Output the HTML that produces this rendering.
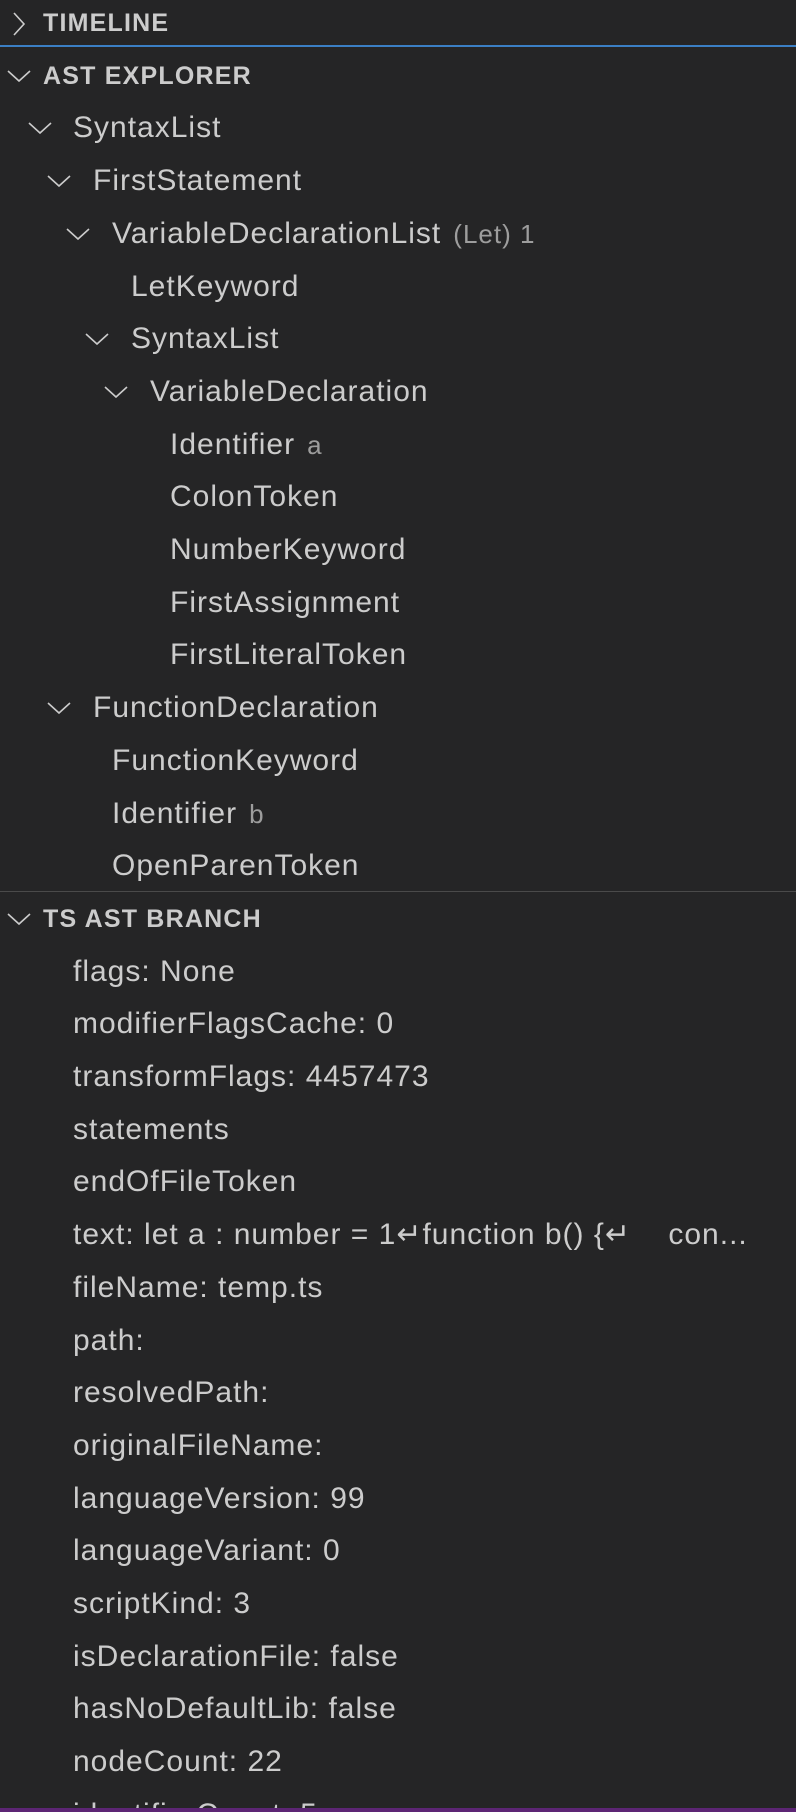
<!DOCTYPE html>
<html><head><meta charset="utf-8"><style>
html,body{margin:0;padding:0;background:#252526;width:796px;height:1812px;overflow:hidden;}
body{position:relative;font-family:"Liberation Sans",sans-serif;color:#cccccc;}
.r{position:absolute;left:0;right:0;height:52.7px;line-height:52.7px;font-size:30px;letter-spacing:1px;white-space:nowrap;}
.h{font-weight:bold;font-size:25px;letter-spacing:1.2px;}
.d{color:#9d9d9d;font-size:26px;margin-left:12px;letter-spacing:1px;}
svg.c{position:absolute;top:19px;}
.t{position:absolute;}
</style></head><body>
<div style="position:absolute;left:0;right:0;top:45px;height:2px;background:#3b7fc4"></div>
<div style="position:absolute;left:0;right:0;top:891px;height:1px;background:#4a4a4a"></div>

<div class="r h" style="top:-3px"><svg class="c" style="left:12px;top:14px" width="14" height="26" viewBox="0 0 14 26"><path d="M2 2 L12 13 L2 24" fill="none" stroke="#ccc" stroke-width="1.6"/></svg><span class="t" style="left:43px">TIMELINE</span></div>
<div class="r h" style="top:49.7px"><svg class="c" style="left:6px" width="26" height="14" viewBox="0 0 26 14"><path d="M2 2 L13 12 L24 2" fill="none" stroke="#ccc" stroke-width="1.6"/></svg><span class="t" style="left:43px">AST EXPLORER</span></div>

<div class="r" style="top:102.4px"><svg class="c" style="left:27px" width="26" height="14" viewBox="0 0 26 14"><path d="M2 2 L13 12 L24 2" fill="none" stroke="#ccc" stroke-width="1.6"/></svg><span class="t" style="left:73px">SyntaxList</span></div>
<div class="r" style="top:155.1px"><svg class="c" style="left:46px" width="26" height="14" viewBox="0 0 26 14"><path d="M2 2 L13 12 L24 2" fill="none" stroke="#ccc" stroke-width="1.6"/></svg><span class="t" style="left:93px">FirstStatement</span></div>
<div class="r" style="top:207.8px"><svg class="c" style="left:65px" width="26" height="14" viewBox="0 0 26 14"><path d="M2 2 L13 12 L24 2" fill="none" stroke="#ccc" stroke-width="1.6"/></svg><span class="t" style="left:112px">VariableDeclarationList<span class="d">(Let) 1</span></span></div>
<div class="r" style="top:260.5px"><span class="t" style="left:131px">LetKeyword</span></div>
<div class="r" style="top:313.2px"><svg class="c" style="left:84px" width="26" height="14" viewBox="0 0 26 14"><path d="M2 2 L13 12 L24 2" fill="none" stroke="#ccc" stroke-width="1.6"/></svg><span class="t" style="left:131px">SyntaxList</span></div>
<div class="r" style="top:365.9px"><svg class="c" style="left:103px" width="26" height="14" viewBox="0 0 26 14"><path d="M2 2 L13 12 L24 2" fill="none" stroke="#ccc" stroke-width="1.6"/></svg><span class="t" style="left:150px">VariableDeclaration</span></div>
<div class="r" style="top:418.6px"><span class="t" style="left:170px">Identifier<span class="d">a</span></span></div>
<div class="r" style="top:471.3px"><span class="t" style="left:170px">ColonToken</span></div>
<div class="r" style="top:524px"><span class="t" style="left:170px">NumberKeyword</span></div>
<div class="r" style="top:576.7px"><span class="t" style="left:170px">FirstAssignment</span></div>
<div class="r" style="top:629.4px"><span class="t" style="left:170px">FirstLiteralToken</span></div>
<div class="r" style="top:682.1px"><svg class="c" style="left:46px" width="26" height="14" viewBox="0 0 26 14"><path d="M2 2 L13 12 L24 2" fill="none" stroke="#ccc" stroke-width="1.6"/></svg><span class="t" style="left:93px">FunctionDeclaration</span></div>
<div class="r" style="top:734.8px"><span class="t" style="left:112px">FunctionKeyword</span></div>
<div class="r" style="top:787.5px"><span class="t" style="left:112px">Identifier<span class="d">b</span></span></div>
<div class="r" style="top:840.2px"><span class="t" style="left:112px">OpenParenToken</span></div>

<div class="r h" style="top:892.9px"><svg class="c" style="left:6px" width="26" height="14" viewBox="0 0 26 14"><path d="M2 2 L13 12 L24 2" fill="none" stroke="#ccc" stroke-width="1.6"/></svg><span class="t" style="left:43px">TS AST BRANCH</span></div>
<div class="r" style="top:945.6px"><span class="t" style="left:73px">flags: None</span></div>
<div class="r" style="top:998.3px"><span class="t" style="left:73px">modifierFlagsCache: 0</span></div>
<div class="r" style="top:1051px"><span class="t" style="left:73px">transformFlags: 4457473</span></div>
<div class="r" style="top:1103.7px"><span class="t" style="left:73px">statements</span></div>
<div class="r" style="top:1156.4px"><span class="t" style="left:73px">endOfFileToken</span></div>
<div class="r" style="top:1209.1px"><span class="t" style="left:73px">text: let a : number = 1↵function b() {↵&nbsp;&nbsp;&nbsp;&nbsp;con...</span></div>
<div class="r" style="top:1261.8px"><span class="t" style="left:73px">fileName: temp.ts</span></div>
<div class="r" style="top:1314.5px"><span class="t" style="left:73px">path:</span></div>
<div class="r" style="top:1367.2px"><span class="t" style="left:73px">resolvedPath:</span></div>
<div class="r" style="top:1419.9px"><span class="t" style="left:73px">originalFileName:</span></div>
<div class="r" style="top:1472.6px"><span class="t" style="left:73px">languageVersion: 99</span></div>
<div class="r" style="top:1525.3px"><span class="t" style="left:73px">languageVariant: 0</span></div>
<div class="r" style="top:1578px"><span class="t" style="left:73px">scriptKind: 3</span></div>
<div class="r" style="top:1630.7px"><span class="t" style="left:73px">isDeclarationFile: false</span></div>
<div class="r" style="top:1683.4px"><span class="t" style="left:73px">hasNoDefaultLib: false</span></div>
<div class="r" style="top:1736.1px"><span class="t" style="left:73px">nodeCount: 22</span></div>
<div class="r" style="top:1788.8px"><span class="t" style="left:73px">identifierCount: 5</span></div>
<div style="position:absolute;left:0;right:0;top:1808px;height:4px;background:#5c2574"></div>
</body></html>
